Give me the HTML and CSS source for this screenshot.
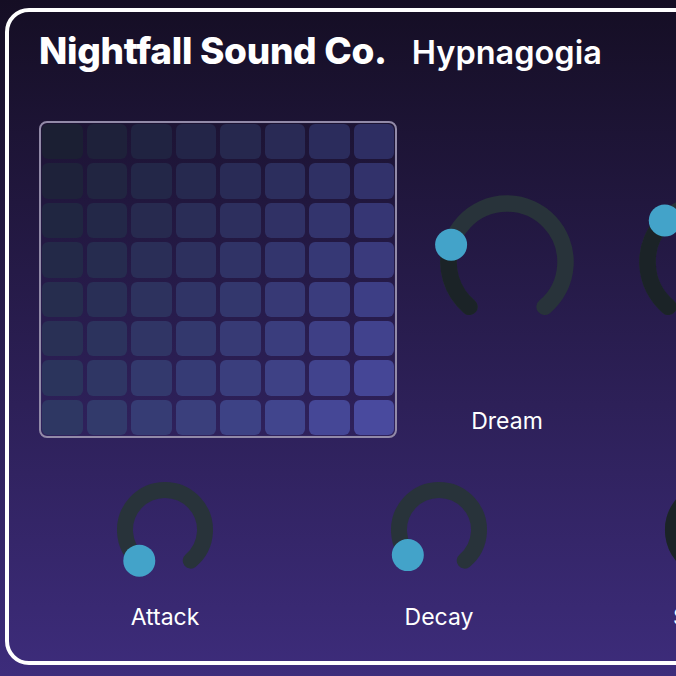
FILE: index.html
```html
<!DOCTYPE html>
<html lang="en">
<head>
    <meta charset="UTF-8">
    <meta name="viewport" content="width=device-width, initial-scale=1.0">
    <title>Hypnagogia</title>
    <link rel="stylesheet" href="styles.css">
</head>
<body>

    <!-- Synth panel -->
    <div class="panel">
        <header class="panel-head">
            <h1 class="brand">Nightfall Sound Co.</h1>
            <h2 class="patch">Hypnagogia</h2>
        </header>

        <!-- Pad grid + macro knobs -->
        <div class="top-row">
            <div class="pad-grid" id="pads"></div>
            <div class="knob knob-lg" data-value="0.24">
                <svg viewBox="0 0 150 150" width="150" height="150"></svg>
                <span class="knob-label">Dream</span>
            </div>
            <div class="knob knob-lg" data-value="0.34">
                <svg viewBox="0 0 150 150" width="150" height="150"></svg>
                <span class="knob-label">Haze</span>
            </div>
        </div>

        <!-- Envelope -->
        <div class="bottom-row">
            <div class="knob knob-sm" data-value="0">
                <svg viewBox="0 0 112 112" width="112" height="112"></svg>
                <span class="knob-label">Attack</span>
            </div>
            <div class="knob knob-sm" data-value="0.04">
                <svg viewBox="0 0 112 112" width="112" height="112"></svg>
                <span class="knob-label">Decay</span>
            </div>
            <div class="knob knob-sm" data-value="0.6">
                <svg viewBox="0 0 112 112" width="112" height="112"></svg>
                <span class="knob-label">Sustain</span>
            </div>
            <div class="knob knob-sm" data-value="0.3">
                <svg viewBox="0 0 112 112" width="112" height="112"></svg>
                <span class="knob-label">Release</span>
            </div>
        </div>
    </div>

    <script>
        // pad colours blend between the four corners
        const TL = [27, 31, 51], TR = [46, 46, 99], BL = [46, 55, 99], BR = [73, 74, 158];

        function mix(a, b, t) {
            return a.map((v, i) => v + (b[i] - v) * t);
        }

        const pads = document.getElementById("pads");
        for (let r = 0; r < 8; r++) {
            for (let c = 0; c < 8; c++) {
                const col = mix(mix(TL, TR, c / 7), mix(BL, BR, c / 7), r / 7).map(Math.round);
                const pad = document.createElement("div");
                pad.className = "pad";
                pad.style.background = `rgb(${col.join(",")})`;
                pads.appendChild(pad);
            }
        }

        // knobs sweep 280 degrees, gap at the bottom
        const START = -140, SWEEP = 280;

        function polar(c, r, deg) {
            const a = deg * Math.PI / 180;
            return [c + r * Math.sin(a), c - r * Math.cos(a)];
        }

        function arc(c, r, from, to) {
            const [x0, y0] = polar(c, r, from);
            const [x1, y1] = polar(c, r, to);
            const large = (to - from) > 180 ? 1 : 0;
            return `M ${x0} ${y0} A ${r} ${r} 0 ${large} 1 ${x1} ${y1}`;
        }

        document.querySelectorAll(".knob").forEach(knob => {
            const big = knob.classList.contains("knob-lg");
            const c = big ? 75 : 56;
            const r = big ? 58.5 : 40;
            const w = big ? 16.5 : 16;
            const angle = START + parseFloat(knob.dataset.value) * SWEEP;
            const [tx, ty] = polar(c, r, angle);

            let html = `<path d="${arc(c, r, START, START + SWEEP)}" class="track" stroke-width="${w}"/>`;
            if (angle > START) {
                html += `<path d="${arc(c, r, START, angle)}" class="fill" stroke-width="${w}"/>`;
            }
            html += `<circle cx="${tx}" cy="${ty}" r="16" class="thumb"/>`;
            knob.querySelector("svg").innerHTML = html;
        });
    </script>

</body>
</html>
```

FILE: styles.css
```css
/* General Styling */
html, body {
    height: 100%;
}

body {
    margin: 0;
    padding: 8px 0 0 5px;
    box-sizing: border-box;
    overflow: hidden;
    background: linear-gradient(#150e24, #3d2c7b);
    font-family: Inter, "Liberation Sans", sans-serif;
    color: #ffffff;
}

/* Panel */
.panel {
    box-sizing: border-box;
    width: 1000px;
    height: 657px;
    border: 4px solid #ffffff;
    border-radius: 24px;
    padding: 16px 30px 0;
}

.panel-head {
    display: flex;
    align-items: baseline;
    gap: 25px;
}

.brand {
    margin: 0;
    font-size: 37px;
    font-weight: 800;
    letter-spacing: -0.3px;
}

.patch {
    margin: 0;
    font-size: 32.5px;
    font-weight: 600;
}

/* Top row */
.top-row {
    display: flex;
    align-items: flex-start;
    margin-top: 48px;
}

.pad-grid {
    box-sizing: border-box;
    width: 358px;
    height: 317px;
    padding: 1px;
    border: 2px solid #928aa8;
    border-radius: 8px;
    display: grid;
    grid-template-columns: repeat(8, 1fr);
    grid-template-rows: repeat(8, 1fr);
    gap: 4px;
    margin-right: 35px;
}

.pad {
    border-radius: 6px;
}

/* Knobs */
.knob {
    display: flex;
    flex-direction: column;
    align-items: center;
}

.knob-label {
    font-size: 23px;
}

.knob-lg {
    width: 150px;
    margin-top: 66px;
}

.knob-lg + .knob-lg {
    margin-left: 49px;
}

.knob-lg .knob-label {
    margin-top: 70px;
}

.knob-sm {
    width: 200px;
    flex-shrink: 0;
}

.knob-sm .knob-label {
    margin-top: 17px;
}

.track, .fill {
    fill: none;
    stroke-linecap: round;
}

.track {
    stroke: #28333a;
}

.fill {
    stroke: #1b2327;
}

.thumb {
    fill: #43a3c9;
}

/* Bottom row */
.bottom-row {
    display: flex;
    gap: 74px;
    margin-top: 36px;
    margin-left: 26px;
}
```
